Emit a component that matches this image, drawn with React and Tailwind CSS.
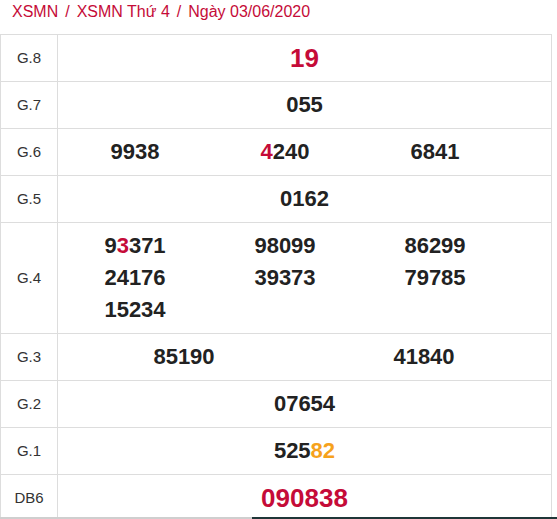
const RED = "text-[#c50b38]"

const rows = [
  { label: "G.8", cols: 1, items: [[{ t: "19", c: "red", big: true }]] },
  { label: "G.7", cols: 1, items: [[{ t: "055" }]] },
  {
    label: "G.6",
    cols: 3,
    items: [[{ t: "9938" }], [{ t: "4", c: "red" }, { t: "240" }], [{ t: "6841" }]],
  },
  { label: "G.5", cols: 1, items: [[{ t: "0162" }]] },
  {
    label: "G.4",
    cols: 3,
    items: [
      [{ t: "9" }, { t: "3", c: "red" }, { t: "371" }],
      [{ t: "98099" }],
      [{ t: "86299" }],
      [{ t: "24176" }],
      [{ t: "39373" }],
      [{ t: "79785" }],
      [{ t: "15234" }],
    ],
  },
  { label: "G.3", cols: 2, items: [[{ t: "85190" }], [{ t: "41840" }]] },
  { label: "G.2", cols: 1, items: [[{ t: "07654" }]] },
  { label: "G.1", cols: 1, items: [[{ t: "525" }, { t: "82", c: "orange" }]] },
  { label: "DB6", cols: 1, items: [[{ t: "090838", c: "red", big: true }]] },
]

const Number = ({ parts }) => {
  const big = parts.some((p) => p.big)
  return (
    <div className={`text-center font-bold leading-[32px] ${big ? "text-[26px]" : "text-[22px]"}`}>
      {parts.map((p, i) => (
        <span
          key={i}
          className={p.c === "red" ? RED : p.c === "orange" ? "text-[#f6a21c]" : "text-[#222222]"}
        >
          {p.t}
        </span>
      ))}
    </div>
  )
}

const gridClass = {
  1: "grid grid-cols-1",
  2: "grid grid-cols-[240px_240px] pl-[6px]",
  3: "grid grid-cols-[150px_150px_150px] pl-[2px]",
}

export default function App() {
  return (
    <div className="relative h-[519px] w-[557px] overflow-hidden bg-white font-['Liberation_Sans',Arial,sans-serif]">
      {/* Breadcrumb */}
      <div className="h-[34px] pl-[12px] text-[16px] leading-[24px] text-[#c50b38]">
        <span>XSMN</span>
        <span className="px-[7px]">/</span>
        <span>XSMN Thứ 4</span>
        <span className="px-[7px]">/</span>
        <span>Ngày 03/06/2020</span>
      </div>

      {/* Results table */}
      <div className="w-[552px] border-l border-r border-t border-[#dddddd]">
        {rows.map((row) => (
          <div key={row.label} className="flex border-b border-[#dddddd]">
            <div className="flex w-[57px] shrink-0 items-center justify-center border-r border-[#dddddd] text-[15px] text-[#333333]">
              {row.label}
            </div>
            <div className={`flex-1 py-[7px] ${gridClass[row.cols]}`}>
              {row.items.map((parts, i) => (
                <Number key={i} parts={parts} />
              ))}
            </div>
          </div>
        ))}
      </div>

      {/* bottom bar overlay */}
      <div className="fixed bottom-0 left-0 flex h-[2px] w-[557px]">
        <div className="w-[252px] bg-[#cfcfcf]" />
        <div className="flex-1 bg-[#1f3638]" />
      </div>
    </div>
  )
}
